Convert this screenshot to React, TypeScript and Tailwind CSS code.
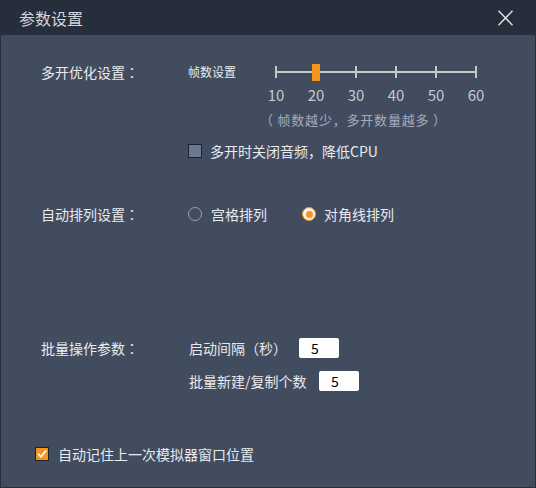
import React from "react";

const FONT = { fontFamily: '"Microsoft YaHei", "Noto Sans CJK SC", "Noto Sans", sans-serif' };

function P({ children }: { children: React.ReactNode }) {
  return <span className="[font-family:'Noto_Sans_CJK_TC',sans-serif]">{children}</span>;
}

function Slider() {
  const ticks = [5, 45, 85, 125, 165, 205];
  return (
    <svg width="210" height="20" viewBox="0 0 210 20" className="block">
      <line x1="5" y1="10" x2="205" y2="10" stroke="#c8c8c8" strokeWidth="2" />
      {ticks.map((x) => (
        <line key={x} x1={x} y1="4" x2={x} y2="16" stroke="#c8c8c8" strokeWidth="2" />
      ))}
      <rect x="41" y="2" width="8" height="17" fill="#f7941d" />
    </svg>
  );
}

function Checkbox({ checked }: { checked?: boolean }) {
  if (checked) {
    return (
      <div className="w-[14px] h-[14px] border border-[#1c2230] bg-[#f7941d] flex items-center justify-center shrink-0">
        <svg width="10" height="10" viewBox="0 0 10 10">
          <path d="M1.5 5.2 L4 7.8 L8.6 2" fill="none" stroke="#ffffff" strokeWidth="1.8" strokeLinecap="round" strokeLinejoin="round" />
        </svg>
      </div>
    );
  }
  return <div className="w-[14px] h-[14px] border border-[#1c2230] bg-[#6b7892] shrink-0" />;
}

function Radio({ checked }: { checked?: boolean }) {
  if (checked) {
    return (
      <div className="w-[14px] h-[14px] rounded-full border-[1.5px] border-[#f7941d] bg-[#f2f2f2] flex items-center justify-center shrink-0">
        <div className="w-[7px] h-[7px] rounded-full bg-[#f7941d]" />
      </div>
    );
  }
  return <div className="w-[14px] h-[14px] rounded-full border-[1.5px] border-[#9da2ab] shrink-0" />;
}

export default function App() {
  return (
    <div className="w-[536px] h-[488px] flex flex-col bg-[#272e3b] text-[#e8eaee] [text-spacing-trim:space-all]" style={FONT}>
      {/* Title bar */}
      <div className="h-[35px] flex items-center justify-between pl-[19px] pr-[23px] shrink-0">
        <span className="text-[16px] leading-none text-[#d4d7dd]">参数设置</span>
        <svg width="15" height="16" viewBox="0 0 15 16">
          <path d="M0.5 0.8 L14.5 15.2 M14.5 0.8 L0.5 15.2" stroke="#dde0e5" strokeWidth="1.4" fill="none" />
        </svg>
      </div>

      {/* Body */}
      <div className="flex-1 mx-[1px] mb-[1px] bg-[#424c5f] flex flex-col pt-[25px] text-[14px] leading-none">
        {/* Section 1 */}
        <div className="flex pl-[40px]">
          <div className="w-[147px] h-[24px] flex items-center shrink-0">多开优化设置<P>：</P></div>
          <div className="flex flex-col">
            <div className="h-[24px] flex items-center">
              <span className="w-[83px] text-[12px]">帧数设置</span>
              <Slider />
            </div>
            <div className="h-[20px] flex items-center ml-[68px] text-[15px] text-[#c5c9d0]">
              {["10", "20", "30", "40", "50", "60"].map((n) => (
                <span key={n} className="w-[40px] text-center">{n}</span>
              ))}
            </div>
            <div className="h-[30px] flex items-center ml-[72px] text-[13px] tracking-[0.8px] text-[#a3acbc] whitespace-pre">
              <P>（</P> 帧数越少，多开数量越多 <P>）</P>
            </div>
            <div className="h-[22px] mt-[6px] flex items-center">
              <Checkbox />
              <span className="ml-[8px]">多开时关闭音频，降低CPU</span>
            </div>
          </div>
        </div>

        {/* Section 2 */}
        <div className="flex pl-[40px] mt-[41px]">
          <div className="w-[147px] h-[22px] flex items-center shrink-0">自动排列设置<P>：</P></div>
          <div className="h-[22px] flex items-center">
            <Radio />
            <span className="ml-[9px] w-[91px]">宫格排列</span>
            <Radio checked />
            <span className="ml-[8px]">对角线排列</span>
          </div>
        </div>

        {/* Section 3 */}
        <div className="flex pl-[40px] mt-[113px]">
          <div className="w-[148px] h-[20px] flex items-center shrink-0">批量操作参数<P>：</P></div>
          <div className="flex flex-col">
            <div className="h-[20px] flex items-center">
              <span className="w-[110px]">启动间隔<P>（</P>秒<P>）</P></span>
              <div className="w-[40px] h-[20px] bg-white rounded-[2px] flex items-center pl-[12px] text-[14px] text-black">5</div>
            </div>
            <div className="h-[20px] mt-[13px] flex items-center">
              <span className="w-[130px]">批量新建/复制个数</span>
              <div className="w-[40px] h-[20px] bg-white rounded-[2px] flex items-center pl-[12px] text-[14px] text-black">5</div>
            </div>
          </div>
        </div>

        {/* Bottom */}
        <div className="flex items-center pl-[34px] mt-[56px] h-[14px]">
          <Checkbox checked />
          <span className="ml-[9px]">自动记住上一次模拟器窗口位置</span>
        </div>
      </div>
    </div>
  );
}
